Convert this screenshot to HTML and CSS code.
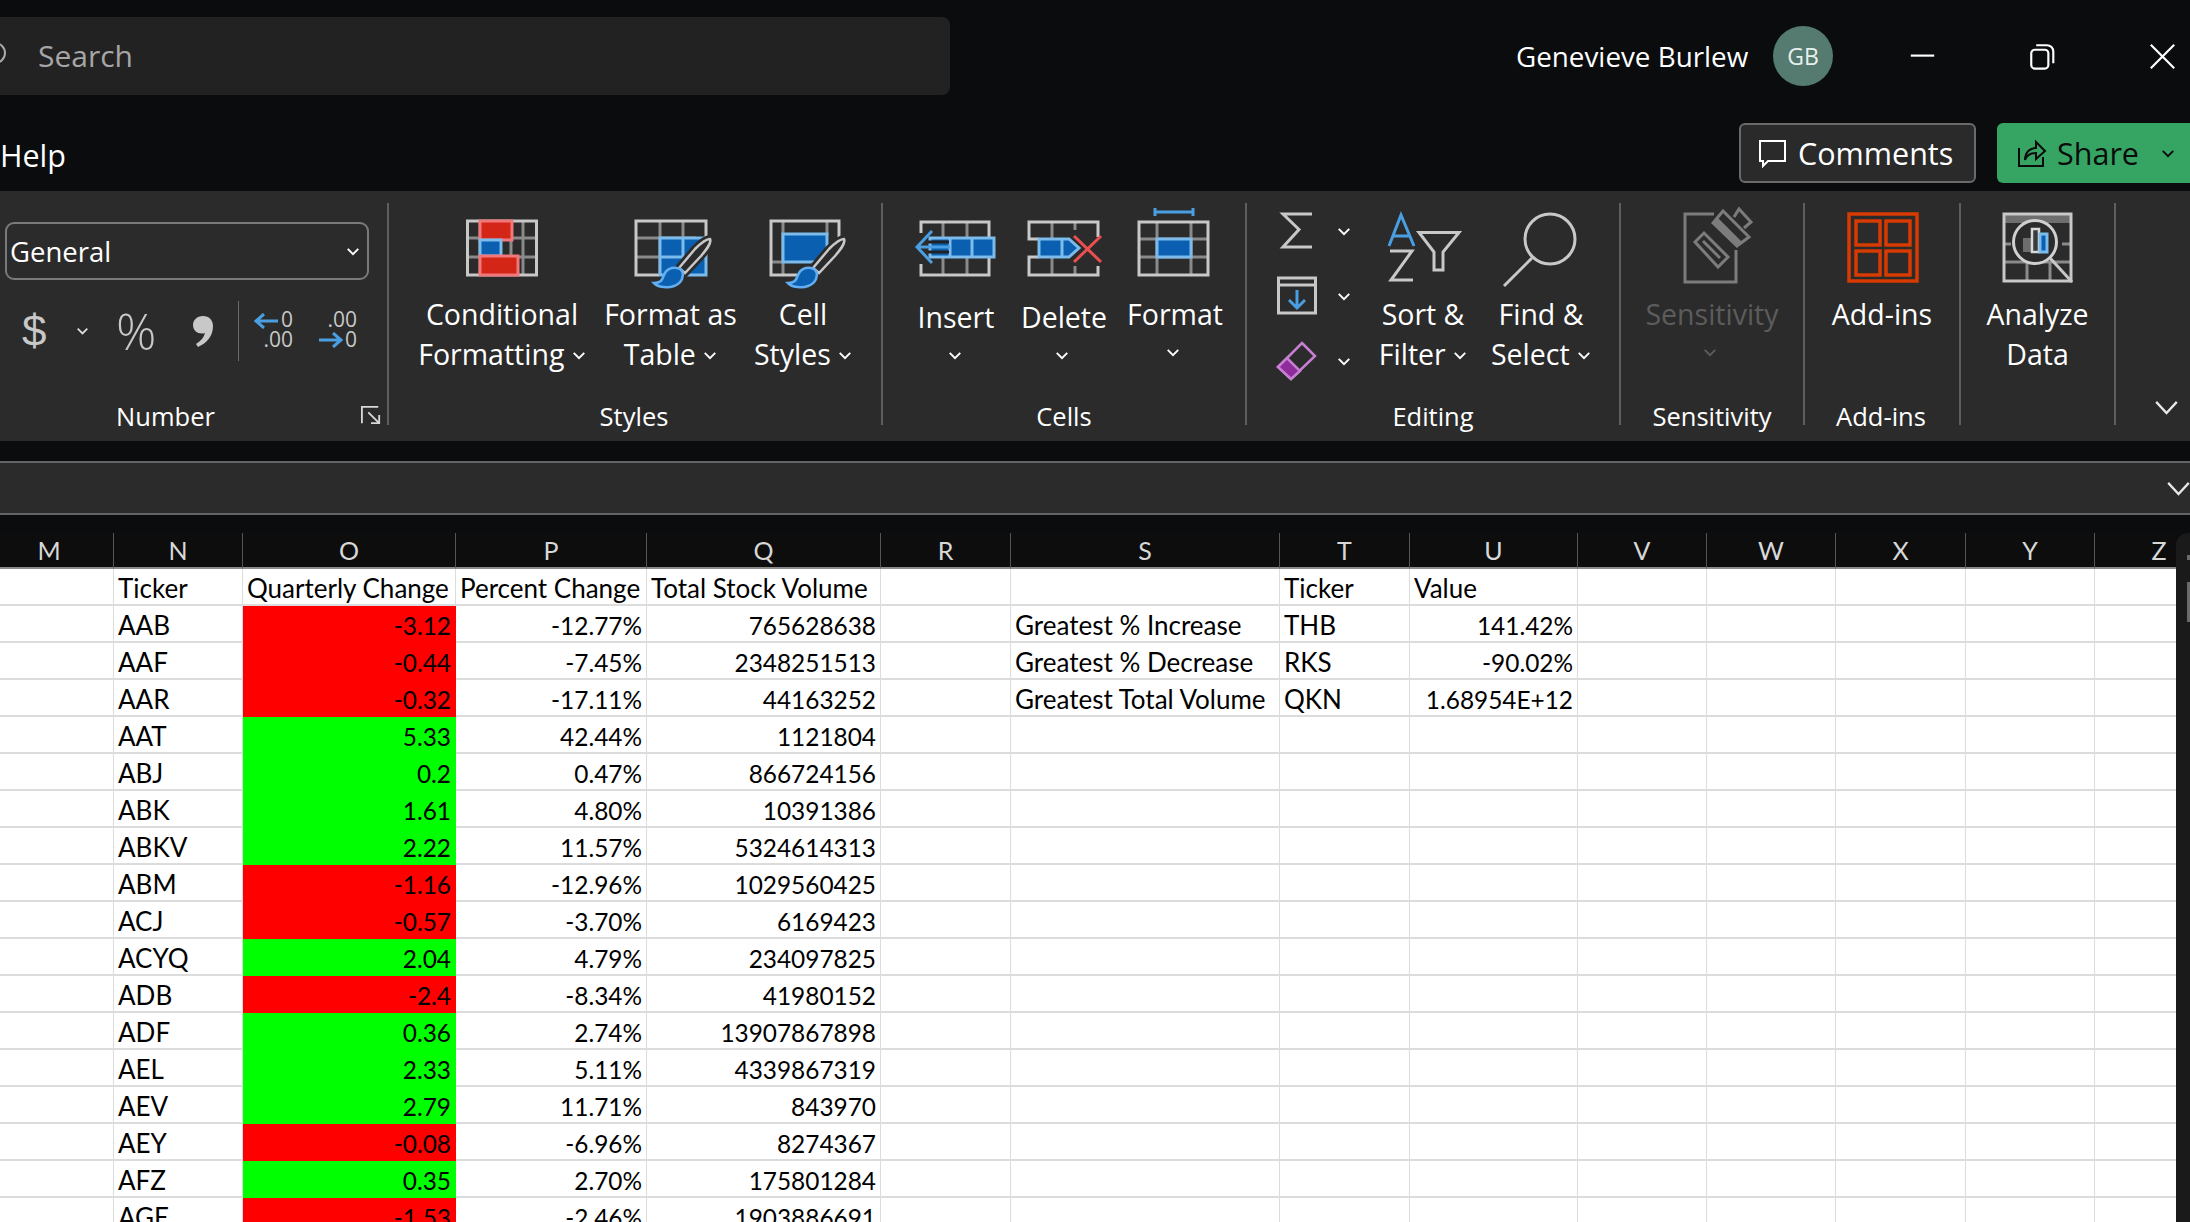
FILE: index.html
```html
<!DOCTYPE html>
<html>
  <head>
    <title>Excel</title>
    <link rel="stylesheet" href="styles.css">
  </head>
  <body>
    <div class="titlebar">
      <div class="search-box"><span class="search-ring"></span><span class="search-text">Search</span></div>
      <div class="user-name">Genevieve Burlew</div>
      <div class="avatar">GB</div>
      <div class="win-controls">
        <svg class="win-icon" viewBox="0 0 30 30"><path d="M2 14h26" /></svg>
        <svg class="win-icon" viewBox="0 0 30 30"><rect x="2.5" y="7.5" width="19" height="21" rx="4" /><path d="M8 2.5h12a7 7 0 0 1 7 7v13" /></svg>
        <svg class="win-icon" viewBox="0 0 30 30"><path d="M2 2l26 26M28 2L2 28" /></svg>
      </div>
    </div>

    <div class="tabrow">
      <div class="tab">Help</div>
      <button class="comments-btn">
        <svg class="btn-icon" viewBox="0 0 30 30"><path d="M2 3h25v20H10l-5 5v-5H2z" /></svg>
        Comments
      </button>
      <button class="share-btn">
        <svg class="btn-icon" viewBox="0 0 30 30"><path d="M2 10v18h24v-9M8 22c0-8 5-12 11-12V4l9 9-9 8v-6c-5 0-9 2-11 7z" /></svg>
        Share
        <svg class="chev share-chev" viewBox="0 0 16 10"><path d="M2 2l6 6 6-6" /></svg>
      </button>
    </div>

    <div class="ribbon">
      <div class="group group-number">
        <div class="group-body number-body">
          <div class="format-select">General<svg class="chev" viewBox="0 0 16 10"><path d="M2 2l6 6 6-6" /></svg></div>
          <div class="number-tools">
            <span class="sym sym-dollar">$</span>
            <svg class="chev small" viewBox="0 0 16 10"><path d="M2 2l6 6 6-6" /></svg>
            <span class="sym sym-pct">%</span>
            <span class="sym-comma"><svg class="comma-icon" viewBox="0 0 20 31"><path d="M10 0c6 0 10 4 10 10 0 10-6 17-15 21l-2-3c5-3 8-7 9-11-1 .5-2 .5-3 .5C4 17.5 0 14 0 9 0 4 4 0 10 0z" /></svg></span>
            <span class="tool-sep"></span>
            <span class="dec-tool dec-less"><svg class="dec-arrow" viewBox="0 0 24 16"><path d="M24 8H2M10 1L2 8l8 7" /></svg><span>0</span><span>.00</span></span>
            <span class="dec-tool dec-more"><svg class="dec-arrow" viewBox="0 0 24 16"><path d="M0 8h22M14 1l8 7-8 7" /></svg><span>.00</span><span>0</span></span>
          </div>
        </div>
        <div class="group-label">Number</div>
        <svg class="launcher" viewBox="0 0 22 22"><path d="M1 20V2h18M8 8l12 12M20 11v9h-9" /></svg>
      </div>

      <div class="group group-styles">
        <div class="group-body">
          <div class="big-btn w-cf">
            <svg class="big-icon" viewBox="0 0 76 84">
              <path class="grid-inner" d="M3 32h70M3 51h70M16 15v54M47 15v54M59 15v54" />
              <path class="grid-line" d="M3.5 15h69v54h-69z" />
              <rect x="16" y="15" width="32" height="19" class="cf-red" />
              <rect x="16" y="34" width="21" height="16" class="cell-blue" />
              <rect x="16" y="50" width="38" height="19" class="cf-red" />
            </svg>
            <div class="big-text">Conditional<br>Formatting <svg class="chev" viewBox="0 0 16 10"><path d="M2 2l6 6 6-6" /></svg></div>
          </div>
          <div class="big-btn w-ft">
            <svg class="big-icon" viewBox="0 0 84 84">
              <path class="grid-inner" d="M7 32h60M7 51h60M31 15v54M54 15v54" />
              <path class="grid-line" d="M30 69H7V15h70v18" />
              <rect x="31" y="32" width="46" height="37" class="cell-blue" />
              <path class="blue-line" d="M31 51h46M54 32v37" />
              <path class="brush-halo" d="M81 33c-4 0-10 5-15 10L50 62l6 5L72 50c5-6 11-13 9-17z" />
              <path class="brush-handle" d="M81 33c-4 0-10 5-15 10L50 62l6 5L72 50c5-6 11-13 9-17z" />
              <path class="brush-head" d="M25 77c6 0 8-2 10-8 2-6 8-8 13-7 6 1 7 6 5 11-3 7-12 9-18 8-4 0-8-2-10-4z" />
            </svg>
            <div class="big-text">Format as<br>Table <svg class="chev" viewBox="0 0 16 10"><path d="M2 2l6 6 6-6" /></svg></div>
          </div>
          <div class="big-btn w-cs">
            <svg class="big-icon" viewBox="0 0 84 84">
              <path class="grid-inner" d="M10 56h12M22 15v54M66 15v14" />
              <path class="grid-line" d="M36 69H10V15h68v17" />
              <path class="cell-blue" d="M22 28h44v28H22z" />
              <g transform="translate(2 0)">
                <path class="brush-halo" d="M81 33c-4 0-10 5-15 10L50 62l6 5L72 50c5-6 11-13 9-17z" />
                <path class="brush-handle" d="M81 33c-4 0-10 5-15 10L50 62l6 5L72 50c5-6 11-13 9-17z" />
                <path class="brush-head" d="M25 77c6 0 8-2 10-8 2-6 8-8 13-7 6 1 7 6 5 11-3 7-12 9-18 8-4 0-8-2-10-4z" />
              </g>
            </svg>
            <div class="big-text">Cell<br>Styles <svg class="chev" viewBox="0 0 16 10"><path d="M2 2l6 6 6-6" /></svg></div>
          </div>
        </div>
        <div class="group-label">Styles</div>
      </div>

      <div class="group group-cells">
        <div class="group-body">
          <div class="big-btn w-insert low">
            <svg class="big-icon" viewBox="0 0 84 84">
              <path class="grid-inner" d="M29 16v53M53 16v53" />
              <path class="grid-line" d="M7 27V16h68v53H7V58" />
              <path class="cell-blue" d="M16 32h64v19H16z" />
              <path class="blue-line" d="M58 32v19M36 32v19" />
              <path class="insert-shaft" d="M14 36h21M14 46h21" />
              <path class="arrow-blue" d="M36 41H3M18 25L3 41l15 16" />
            </svg>
            <div class="big-text">Insert<br><svg class="chev chev-solo" viewBox="0 0 16 10"><path d="M2 2l6 6 6-6" /></svg></div>
          </div>
          <div class="big-btn w-delete low">
            <svg class="big-icon" viewBox="0 0 84 84">
              <path class="grid-inner" d="M30 16v17M30 52v17M53 16v8M53 60v9" />
              <path class="grid-line" d="M17 33H7V16h69v15M17 51H7v18h69v-9" />
              <path class="cell-blue" d="M17 33h30l10 9-10 9H17z" />
              <path class="blue-line" d="M40 33v18" />
              <path class="del-x" d="M52 30l27 26M79 30L52 56" />
            </svg>
            <div class="big-text">Delete<br><svg class="chev chev-solo" viewBox="0 0 16 10"><path d="M2 2l6 6 6-6" /></svg></div>
          </div>
          <div class="big-btn w-format">
            <svg class="big-icon" viewBox="0 0 84 84">
              <path class="arrow-blue" d="M22 2v8M60 2v8M22 6h38" />
              <path class="grid-inner" d="M6 33h69M6 51h69M24 16v53M58 16v53" />
              <path class="grid-line" d="M6 16h69v53H6z" />
              <rect x="24" y="33" width="34" height="18" class="cell-blue" />
            </svg>
            <div class="big-text">Format<br><svg class="chev chev-solo" viewBox="0 0 16 10"><path d="M2 2l6 6 6-6" /></svg></div>
          </div>
        </div>
        <div class="group-label">Cells</div>
      </div>

      <div class="group group-editing">
        <div class="group-body">
          <div class="edit-stack">
            <div class="edit-row">
              <svg class="edit-icon" viewBox="0 0 40 40"><path class="grid-line" d="M35 3H6l16 15.5L6 36h29" /></svg>
              <svg class="chev" viewBox="0 0 16 10"><path d="M2 2l6 6 6-6" /></svg>
            </div>
            <div class="edit-row">
              <svg class="edit-icon" viewBox="0 0 40 40"><path class="grid-line" d="M1.5 2h37v35h-37zM1.5 9h37" /><path class="arrow-blue" d="M20 14v18M12 24l8 8 8-8" /></svg>
              <svg class="chev" viewBox="0 0 16 10"><path d="M2 2l6 6 6-6" /></svg>
            </div>
            <div class="edit-row">
              <svg class="edit-icon" viewBox="0 0 40 40"><path class="eraser" d="M25 2l13 13-24 23L1 26z" /><path class="eraser-fill" d="M1 26l9-9 13 13-9 8z" /></svg>
              <svg class="chev" viewBox="0 0 16 10"><path d="M2 2l6 6 6-6" /></svg>
            </div>
          </div>
          <div class="big-btn w-sort">
            <svg class="big-icon" viewBox="0 0 84 84">
              <path class="arrow-blue" d="M8 40L20 9l13 31M12 30h17" />
              <path class="grid-line" d="M9 45h22L10 74h22" />
              <path class="grid-line" d="M38 26.500h40L62 46v18h-9V46z" />
            </svg>
            <div class="big-text">Sort &amp;<br>Filter <svg class="chev" viewBox="0 0 16 10"><path d="M2 2l6 6 6-6" /></svg></div>
          </div>
          <div class="big-btn w-find">
            <svg class="big-icon" viewBox="0 0 84 84">
              <circle cx="51" cy="33" r="25" class="grid-line" />
              <path class="grid-line" d="M33 52L5 80" />
            </svg>
            <div class="big-text">Find &amp;<br>Select <svg class="chev" viewBox="0 0 16 10"><path d="M2 2l6 6 6-6" /></svg></div>
          </div>
        </div>
        <div class="group-label">Editing</div>
      </div>

      <div class="group group-sens">
        <div class="group-body">
          <div class="big-btn w-sens disabled">
            <svg class="big-icon" viewBox="0 0 84 84">
              <g class="sens-lines">
                <path d="M44 8H15v68h51V44" />
                <path d="M25 36l9-9 24 24-10 10z" />
                <path d="M43 17L53 5l26 26-12 9z" />
                <path d="M64 11l5-8 12 13-7 6" />
              </g>
              <path class="sens-fill" d="M32 36l2-2 17 17-2 2zM43 17l5-5 24 24-5 5z" />
            </svg>
            <div class="big-text">Sensitivity<br><svg class="chev chev-solo" viewBox="0 0 16 10"><path d="M2 2l6 6 6-6" /></svg></div>
          </div>
        </div>
        <div class="group-label">Sensitivity</div>
      </div>

      <div class="group group-addins">
        <div class="group-body">
          <div class="big-btn w-addins">
            <svg class="big-icon" viewBox="0 0 84 84">
              <g class="addin-lines">
                <rect x="9" y="8" width="68" height="67" />
                <rect x="16" y="15" width="24" height="24" />
                <rect x="46" y="15" width="24" height="24" />
                <rect x="16" y="45" width="24" height="24" />
                <rect x="46" y="45" width="24" height="24" />
              </g>
            </svg>
            <div class="big-text">Add-ins</div>
          </div>
        </div>
        <div class="group-label">Add-ins</div>
      </div>

      <div class="group group-analyze">
        <div class="group-body">
          <div class="big-btn w-analyze">
            <svg class="big-icon" viewBox="0 0 84 84">
              <rect x="9" y="9" width="66" height="8" class="band" />
              <path class="grid-inner" d="M7 38h8M66 38h9M7 56h68M31 56v20M54 56v20" />
              <path class="grid-line" d="M8 8h67v67H8z" />
              <circle cx="39" cy="36" r="21.500" class="lens" />
              <path class="grid-line" d="M54 52l22 24" />
              <rect x="27" y="32" width="8" height="14" class="band" />
              <rect x="36" y="23" width="7" height="23" class="bar-white" />
              <rect x="44" y="28" width="7" height="18" class="cell-blue" />
            </svg>
            <div class="big-text">Analyze<br>Data</div>
          </div>
        </div>
      </div>

      <svg class="collapse-ribbon" viewBox="0 0 26 16"><path d="M2 2l11 12L24 2" /></svg>
    </div>

    <div class="formula-bar">
      <svg class="formula-chev" viewBox="0 0 26 16"><path d="M2 2l11 12L24 2" /></svg>
    </div>

    <div class="sheet">
      <div class="grid-wrap">
        <table class="cells">
          <colgroup>
            <col class="c-129"><col class="c-129"><col class="c-213"><col class="c-191"><col class="c-234"><col class="c-130"><col class="c-269"><col class="c-130"><col class="c-168"><col class="c-129"><col class="c-129"><col class="c-130"><col class="c-129"><col class="c-129">
          </colgroup>
          <thead>
            <tr><th>M</th><th>N</th><th>O</th><th>P</th><th>Q</th><th>R</th><th>S</th><th>T</th><th>U</th><th>V</th><th>W</th><th>X</th><th>Y</th><th>Z</th></tr>
          </thead>
          <tbody>
            <tr><td></td><td>Ticker</td><td>Quarterly Change</td><td>Percent Change</td><td>Total Stock Volume</td><td></td><td></td><td>Ticker</td><td>Value</td><td></td><td></td><td></td><td></td><td></td></tr>
            <tr><td></td><td>AAB</td><td class="num red">-3.12</td><td class="num">-12.77%</td><td class="num">765628638</td><td></td><td>Greatest % Increase</td><td>THB</td><td class="num">141.42%</td><td></td><td></td><td></td><td></td><td></td></tr>
            <tr><td></td><td>AAF</td><td class="num red">-0.44</td><td class="num">-7.45%</td><td class="num">2348251513</td><td></td><td>Greatest % Decrease</td><td>RKS</td><td class="num">-90.02%</td><td></td><td></td><td></td><td></td><td></td></tr>
            <tr><td></td><td>AAR</td><td class="num red">-0.32</td><td class="num">-17.11%</td><td class="num">44163252</td><td></td><td>Greatest Total Volume</td><td>QKN</td><td class="num">1.68954E+12</td><td></td><td></td><td></td><td></td><td></td></tr>
            <tr><td></td><td>AAT</td><td class="num green">5.33</td><td class="num">42.44%</td><td class="num">1121804</td><td></td><td></td><td></td><td></td><td></td><td></td><td></td><td></td><td></td></tr>
            <tr><td></td><td>ABJ</td><td class="num green">0.2</td><td class="num">0.47%</td><td class="num">866724156</td><td></td><td></td><td></td><td></td><td></td><td></td><td></td><td></td><td></td></tr>
            <tr><td></td><td>ABK</td><td class="num green">1.61</td><td class="num">4.80%</td><td class="num">10391386</td><td></td><td></td><td></td><td></td><td></td><td></td><td></td><td></td><td></td></tr>
            <tr><td></td><td>ABKV</td><td class="num green">2.22</td><td class="num">11.57%</td><td class="num">5324614313</td><td></td><td></td><td></td><td></td><td></td><td></td><td></td><td></td><td></td></tr>
            <tr><td></td><td>ABM</td><td class="num red">-1.16</td><td class="num">-12.96%</td><td class="num">1029560425</td><td></td><td></td><td></td><td></td><td></td><td></td><td></td><td></td><td></td></tr>
            <tr><td></td><td>ACJ</td><td class="num red">-0.57</td><td class="num">-3.70%</td><td class="num">6169423</td><td></td><td></td><td></td><td></td><td></td><td></td><td></td><td></td><td></td></tr>
            <tr><td></td><td>ACYQ</td><td class="num green">2.04</td><td class="num">4.79%</td><td class="num">234097825</td><td></td><td></td><td></td><td></td><td></td><td></td><td></td><td></td><td></td></tr>
            <tr><td></td><td>ADB</td><td class="num red">-2.4</td><td class="num">-8.34%</td><td class="num">41980152</td><td></td><td></td><td></td><td></td><td></td><td></td><td></td><td></td><td></td></tr>
            <tr><td></td><td>ADF</td><td class="num green">0.36</td><td class="num">2.74%</td><td class="num">13907867898</td><td></td><td></td><td></td><td></td><td></td><td></td><td></td><td></td><td></td></tr>
            <tr><td></td><td>AEL</td><td class="num green">2.33</td><td class="num">5.11%</td><td class="num">4339867319</td><td></td><td></td><td></td><td></td><td></td><td></td><td></td><td></td><td></td></tr>
            <tr><td></td><td>AEV</td><td class="num green">2.79</td><td class="num">11.71%</td><td class="num">843970</td><td></td><td></td><td></td><td></td><td></td><td></td><td></td><td></td><td></td></tr>
            <tr><td></td><td>AEY</td><td class="num red">-0.08</td><td class="num">-6.96%</td><td class="num">8274367</td><td></td><td></td><td></td><td></td><td></td><td></td><td></td><td></td><td></td></tr>
            <tr><td></td><td>AFZ</td><td class="num green">0.35</td><td class="num">2.70%</td><td class="num">175801284</td><td></td><td></td><td></td><td></td><td></td><td></td><td></td><td></td><td></td></tr>
            <tr><td></td><td>AGE</td><td class="num red">-1.53</td><td class="num">-2.46%</td><td class="num">1903886691</td><td></td><td></td><td></td><td></td><td></td><td></td><td></td><td></td><td></td></tr>
          </tbody>
        </table>
      </div>
      <div class="scrollbar"><span class="scroll-arrow"></span><span class="scroll-thumb"></span></div>
    </div>
  </body>
</html>
```
FILE: styles.css
```css
body {
  margin: 0;
  width: 2190px;
  height: 1222px;
  overflow: hidden;
  background-color: #0a0c0e;
  color: #fff;
  font-family: "Open Sans", "Noto Sans", sans-serif;
}

svg {
  display: block;
  flex: none;
}

.chev {
  display: inline-block;
  width: 14px;
  height: 9px;
  fill: none;
  stroke: #fff;
  stroke-width: 2.2;
}

.chev.small {
  width: 13px;
  height: 8px;
  stroke: #ddd;
}

/* title bar */
.titlebar {
  height: 112px;
  display: flex;
  align-items: center;
}

.search-box {
  flex: none;
  width: 950px;
  height: 78px;
  box-sizing: border-box;
  padding: 0 0 2px 38px;
  display: flex;
  align-items: center;
  background-color: #222;
  border-radius: 0 8px 8px 0;
  position: relative;
  overflow: hidden;
}

.search-ring {
  position: absolute;
  left: -16px;
  top: 25px;
  width: 18px;
  height: 18px;
  border: 2px solid #aaa;
  border-radius: 50%;
}

.search-text {
  font-size: 30px;
  color: #a6a6a6;
}

.user-name {
  flex: none;
  margin-left: 566px;
  font-size: 27.8px;
  width: 257px;
  white-space: nowrap;
}

.avatar {
  flex: none;
  width: 60px;
  height: 60px;
  border-radius: 50%;
  background-color: #557a70;
  display: flex;
  align-items: center;
  justify-content: center;
  font-size: 23px;
  color: #e6f0ec;
}

.win-controls {
  margin-left: 76px;
  display: flex;
  gap: 93px;
}

.win-icon {
  width: 27px;
  height: 27px;
  fill: none;
  stroke: #fff;
  stroke-width: 2.4;
}

/* tab row */
.tabrow {
  height: 79px;
  display: flex;
  align-items: flex-start;
}

.tab {
  flex: none;
  font-size: 30.5px;
  margin-top: 21px;
  width: 1739px;
  line-height: 44px;
}

.comments-btn,
.share-btn {
  flex: none;
  height: 60px;
  margin-top: 11px;
  display: flex;
  align-items: center;
  font-family: inherit;
  font-size: 30.5px;
  border-radius: 6px;
  box-sizing: border-box;
  padding: 0 0 0 17px;
  gap: 10px;
}

.comments-btn {
  width: 237px;
  background-color: #2a2a2a;
  border: 2px solid #6a6a6a;
  color: #fff;
}

.share-btn {
  width: 210px;
  margin-left: 21px;
  background-color: #36a564;
  border: none;
  color: #0b0b0b;
  padding-left: 20px;
}

.btn-icon {
  width: 30px;
  height: 30px;
  fill: none;
  stroke: currentColor;
  stroke-width: 2;
}

.share-chev {
  stroke: #0b0b0b;
  margin-left: 12px;
}

/* ribbon */
.ribbon {
  height: 250px;
  box-sizing: border-box;
  padding-top: 12px;
  display: flex;
  background-color: #2b2b2b;
  position: relative;
}

.group {
  flex: none;
  height: 222px;
  box-sizing: border-box;
  border-right: 2px solid #5e5e5e;
  display: flex;
  flex-direction: column;
  position: relative;
}

.group-number { width: 389px; }
.group-styles { width: 494px; }
.group-cells { width: 364px; }
.group-editing { width: 374px; }
.group-sens { width: 184px; }
.group-addins { width: 156px; }
.group-analyze { width: 155px; }

.group-body {
  flex: none;
  height: 198px;
  display: flex;
  justify-content: center;
}

.group-styles .group-body {
  justify-content: flex-start;
  padding-left: 26px;
}

.group-cells .group-body {
  justify-content: flex-start;
  padding-left: 13px;
}

.group-editing .group-body {
  justify-content: flex-start;
  padding-left: 30px;
}

.group-label {
  flex: none;
  font-size: 25.5px;
  line-height: 30px;
  text-align: center;
}

.group-number .group-label {
  padding-right: 56px;
}

.group-styles .group-label,
.group-addins .group-label {
  padding-right: 2px;
}

.launcher {
  position: absolute;
  right: 6px;
  bottom: 0;
  width: 20px;
  height: 20px;
  fill: none;
  stroke: #d8d8d8;
  stroke-width: 2;
}

/* number group */
.number-body {
  display: block;
}

.format-select {
  margin: 19px 0 0 5px;
  width: 364px;
  height: 58px;
  box-sizing: border-box;
  border: 2px solid #7a7a7a;
  border-radius: 9px;
  display: flex;
  align-items: center;
  justify-content: space-between;
  padding: 0 7px 0 3px;
  font-size: 27.5px;
}

.number-tools {
  margin-top: 21px;
  display: flex;
  align-items: center;
  height: 60px;
}

.sym {
  color: #c8c8c8;
  line-height: 60px;
}

.sym-dollar {
  font-family: "Liberation Sans", sans-serif;
  font-size: 44px;
  margin-left: 22px;
  width: 54px;
}

.sym-pct {
  font-size: 50px;
  font-weight: 300;
  margin-left: 27px;
  width: 77px;
}

.sym-comma {
  width: 45px;
}

.comma-icon {
  width: 20px;
  height: 31px;
  fill: #c8c8c8;
}

.tool-sep {
  width: 1px;
  height: 60px;
  background-color: #6a6a6a;
  margin-right: 15px;
}

.dec-tool {
  flex: none;
  margin-top: -4px;
  height: 40px;
  display: flex;
  flex-direction: column;
  align-items: flex-end;
  position: relative;
  font-size: 21px;
  line-height: 20px;
  color: #c8c8c8;
}

.dec-less {
  width: 39px;
}

.dec-more {
  width: 64px;
}

.dec-arrow {
  position: absolute;
  width: 24px;
  height: 16px;
  fill: none;
  stroke: #4a9fe2;
  stroke-width: 3;
}

.dec-less .dec-arrow {
  left: 0;
  top: 4px;
}

.dec-more .dec-arrow {
  left: 26px;
  top: 23px;
}

/* large buttons */
.big-btn {
  display: flex;
  flex-direction: column;
  align-items: center;
  flex: none;
}

.big-icon {
  width: 84px;
  height: 84px;
  margin-top: 3px;
  fill: none;
  overflow: visible;
}

.w-cf .big-icon {
  width: 76px;
}

.big-text {
  margin-top: 4px;
  font-size: 28.5px;
  line-height: 40px;
  text-align: center;
  white-space: nowrap;
}

.big-btn.low .big-text {
  margin-top: 7px;
}

.big-btn.disabled .big-text {
  color: #5c5c5c;
}

.big-btn.disabled .chev {
  stroke: #5c5c5c;
}

.big-text .chev {
  vertical-align: 5px;
  margin-left: 0;
}

.big-text .chev-solo {
  vertical-align: 8px;
  margin-left: -3px;
}

/* icon paints */
.grid-line {
  fill: none;
  stroke: #c8c8c8;
  stroke-width: 3;
}

.grid-inner {
  fill: none;
  stroke: #8a8a8a;
  stroke-width: 3;
}

.cf-red {
  fill: #d42616;
  stroke: #f2777a;
  stroke-width: 3;
}

.cell-blue {
  fill: #0b5fb0;
  stroke: #7cbcec;
  stroke-width: 3;
}

.blue-line {
  fill: none;
  stroke: #7cbcec;
  stroke-width: 3;
}

.arrow-blue {
  fill: none;
  stroke: #4a9fe2;
  stroke-width: 3;
}

.insert-shaft {
  fill: none;
  stroke: #222;
  stroke-width: 3;
}

.del-x {
  fill: none;
  stroke: #ec4f4f;
  stroke-width: 3;
}

.brush-halo {
  fill: #2b2b2b;
  stroke: #2b2b2b;
  stroke-width: 8;
}

.brush-handle {
  fill: #2b2b2b;
  stroke: #c8c8c8;
  stroke-width: 2.5;
}

.brush-head {
  fill: #0b5fb0;
  stroke: #62aef0;
  stroke-width: 2.5;
}

.eraser {
  fill: none;
  stroke: #c77fd2;
  stroke-width: 2.5;
}

.eraser-fill {
  fill: #8f2c9c;
  stroke: #c77fd2;
  stroke-width: 2.5;
}

.sens-lines {
  fill: none;
  stroke: #7c7c7c;
  stroke-width: 3;
}

.sens-fill {
  fill: #7c7c7c;
}

.addin-lines {
  fill: none;
  stroke: #d83b01;
  stroke-width: 3.5;
}

.band {
  fill: #6e6e6e;
}

.lens {
  fill: #2b2b2b;
  stroke: #d0d0d0;
  stroke-width: 3;
}

.bar-white {
  fill: #3a3a3a;
  stroke: #d8d8d8;
  stroke-width: 2.5;
}

/* button slots */
.w-cf { width: 174px; }
.w-ft { width: 163px; }
.w-cs { width: 102px; }
.w-insert { width: 120px; }
.w-delete { width: 96px; }
.w-format { width: 126px; }
.w-sort { width: 118px; }
.w-find { width: 118px; }
.w-sens { width: 180px; }
.w-addins { width: 150px; }
.w-analyze { width: 150px; }

.edit-stack {
  flex: none;
  width: 87px;
  display: flex;
  flex-direction: column;
  padding-top: 8px;
  gap: 25px;
}

.edit-row {
  display: flex;
  align-items: center;
  gap: 20px;
}

.edit-icon {
  width: 40px;
  height: 40px;
  overflow: visible;
}

.collapse-ribbon,
.formula-chev {
  width: 25px;
  height: 15px;
  fill: none;
  stroke: #e8e8e8;
  stroke-width: 2.4;
}

.collapse-ribbon {
  position: absolute;
  right: 11px;
  top: 209px;
}

/* formula bar */
.formula-bar {
  height: 54px;
  margin-top: 20px;
  box-sizing: border-box;
  border-top: 2px solid #636363;
  border-bottom: 2px solid #636363;
  background-color: #2b2b2b;
  position: relative;
}

.formula-chev {
  position: absolute;
  right: -1px;
  top: 18px;
}

/* sheet */
.sheet {
  margin-top: 18px;
  height: 690px;
  overflow: hidden;
  display: flex;
}

.grid-wrap {
  flex: none;
  width: 2176px;
  overflow: hidden;
}

.cells {
  margin-left: -15px;
  width: 2239px;
  table-layout: fixed;
  border-collapse: separate;
  border-spacing: 0;
  font-family: Lato, "Liberation Sans", sans-serif;
}

.c-129 { width: 129px; }
.c-130 { width: 130px; }
.c-168 { width: 168px; }
.c-191 { width: 191px; }
.c-213 { width: 213px; }
.c-234 { width: 234px; }
.c-269 { width: 269px; }

.cells th {
  height: 36px;
  box-sizing: border-box;
  padding: 0;
  background-color: #0d0d0d;
  border-right: 1px solid #555;
  border-bottom: 2px solid #8a8a8a;
  font-weight: normal;
  font-size: 25px;
  color: #d8d8d8;
}

.cells td {
  height: 37px;
  box-sizing: border-box;
  padding: 4px 4px 0;
  background-color: #fff;
  border-right: 1px solid #dcdcdc;
  border-bottom: 2px solid #dcdcdc;
  font-size: 26px;
  line-height: 31px;
  color: #000;
  white-space: nowrap;
  overflow: hidden;
}

.cells td.num {
  font-size: 24.4px;
  text-align: right;
}

.cells td.red {
  background-color: #f00;
  border-color: #f00;
}

.cells td.green {
  background-color: #0f0;
  border-color: #0f0;
}

.scrollbar {
  flex: none;
  width: 14px;
  background-color: #1a1a1a;
  border-radius: 12px 0 0 0;
  box-sizing: border-box;
  padding: 22px 0 0 11px;
}

.scroll-arrow,
.scroll-thumb {
  display: block;
  background-color: #6a6a6a;
}

.scroll-arrow {
  width: 3px;
  height: 5px;
}

.scroll-thumb {
  margin-top: 22px;
  width: 3px;
  height: 40px;
}
```
